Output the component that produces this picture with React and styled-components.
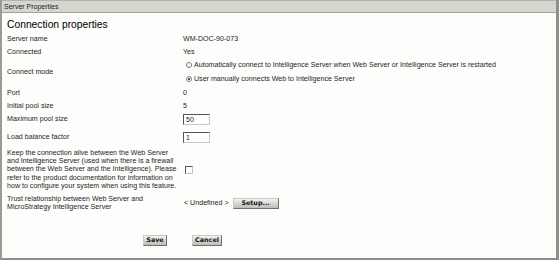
import React from "react";
import styled, { createGlobalStyle } from "styled-components";

const Global = createGlobalStyle`
  html, body { margin: 0; padding: 0; background: #ffffff; }
  body { font-family: "Liberation Sans", Arial, sans-serif; }
`;

const Frame = styled.div`
  width: 559px;
  height: 260px;
  box-sizing: border-box;
  border-left: 2px solid #9a9a96;
  border-right: 3px solid #8e8e8a;
  border-bottom: 2px solid #8e8e8a;
  background: #fdfdfb;
  display: flex;
  flex-direction: column;
`;

const TitleBar = styled.div`
  height: 11px;
  background: #d6d5ce;
  border-top: 1px solid #b4b3ac;
  border-bottom: 1px solid #a3a29c;
  font-size: 7px;
  line-height: 11px;
  color: #1c1c1c;
  padding-left: 2px;
`;

const Body = styled.div`
  padding: 5px 0 0 5px;
  color: #1e1e1e;
  font-size: 7.1px;
`;

const Heading = styled.h2`
  margin: 0;
  font-size: 10.3px;
  font-weight: normal;
  line-height: 14px;
  color: #000;
`;

const Grid = styled.div`
  display: grid;
  grid-template-columns: 176px auto;
  grid-template-rows: 14px 12px 28px 14px 12px 15px 20px 45px 22px;
  align-items: center;
`;

const Label = styled.div`
  line-height: ${(p) => p.lh || "9px"};
  white-space: nowrap;
`;

const Value = styled.div`
  display: flex;
  align-items: center;
  gap: ${(p) => p.gap || "0"};
  padding-left: ${(p) => p.indent || "0"};
  line-height: 9px;
`;

const RadioGroup = styled.div`
  display: flex;
  flex-direction: column;
  gap: 5px;
  padding-left: 3px;
`;

const RadioRow = styled.label`
  display: flex;
  align-items: center;
  gap: 2px;
  height: 9px;
  white-space: nowrap;
`;

const Radio = styled.span`
  width: 4px;
  height: 4px;
  border-radius: 50%;
  border: 1px solid #7c7c7c;
  background: #fff;
  display: inline-flex;
  align-items: center;
  justify-content: center;
  &::after {
    content: "";
    width: 2px;
    height: 2px;
    border-radius: 50%;
    background: ${(p) => (p.checked ? "#1a1a1a" : "transparent")};
  }
`;

const TextBox = styled.div`
  width: 23px;
  height: 9px;
  border: 1px solid #c8c8c4;
  border-top-color: #555;
  border-left-color: #555;
  background: #fff;
  font-size: 7px;
  line-height: 9px;
  padding-left: 2px;
`;

const Check = styled.span`
  width: 6px;
  height: 6px;
  border: 1px solid #555;
  border-right-color: #c4c4c0;
  border-bottom-color: #c4c4c0;
  background: #fff;
  display: inline-block;
`;

const Button = styled.button`
  font-family: "DejaVu Sans", Verdana, sans-serif;
  font-weight: bold;
  font-size: 6.4px;
  width: ${(p) => p.w};
  height: 11px;
  padding: 0;
  border: 1px solid #c9c9c6;
  border-right-color: #6f6f6c;
  border-bottom-color: #6f6f6c;
  background: linear-gradient(#f4f4f2, #d2d2ce 55%, #bdbdb9);
  color: #151515;
  line-height: 9px;
`;

const Actions = styled.div`
  display: flex;
  gap: 25px;
  padding: 21px 0 0 136px;
`;

export default function App() {
  return (
    <>
      <Global />
      <Frame>
        <TitleBar>Server Properties</TitleBar>
        <Body>
          <Heading>Connection properties</Heading>
          <Grid>
            <Label>Server name</Label>
            <Value>WM-DOC-90-073</Value>
            <Label>Connected</Label>
            <Value>Yes</Value>
            <Label>Connect mode</Label>
            <RadioGroup>
              <RadioRow>
                <Radio />
                Automatically connect to Intelligence Server when Web Server or Intelligence Server is restarted
              </RadioRow>
              <RadioRow>
                <Radio checked />
                User manually connects Web to Intelligence Server
              </RadioRow>
            </RadioGroup>
            <Label>Port</Label>
            <Value>0</Value>
            <Label>Initial pool size</Label>
            <Value>5</Value>
            <Label>Maximum pool size</Label>
            <Value>
              <TextBox>50</TextBox>
            </Value>
            <Label>Load balance factor</Label>
            <Value>
              <TextBox>1</TextBox>
            </Value>
            <Label lh="8.3px">
              Keep the connection alive between the Web Server
              <br />
              and Intelligence Server (used when there is a firewall
              <br />
              between the Web Server and the Intelligence). Please
              <br />
              refer to the product documentation for information on
              <br />
              how to configure your system when using this feature.
            </Label>
            <Value indent="2px">
              <Check />
            </Value>
            <Label lh="8.3px">
              Trust relationship between Web Server and
              <br />
              MicroStrategy Intelligence Server
            </Label>
            <Value indent="1px" gap="4px">
              <span>&lt; Undefined &gt;</span>
              <Button w="46px">Setup...</Button>
            </Value>
          </Grid>
          <Actions>
            <Button w="24px">Save</Button>
            <Button w="30px">Cancel</Button>
          </Actions>
        </Body>
      </Frame>
    </>
  );
}
